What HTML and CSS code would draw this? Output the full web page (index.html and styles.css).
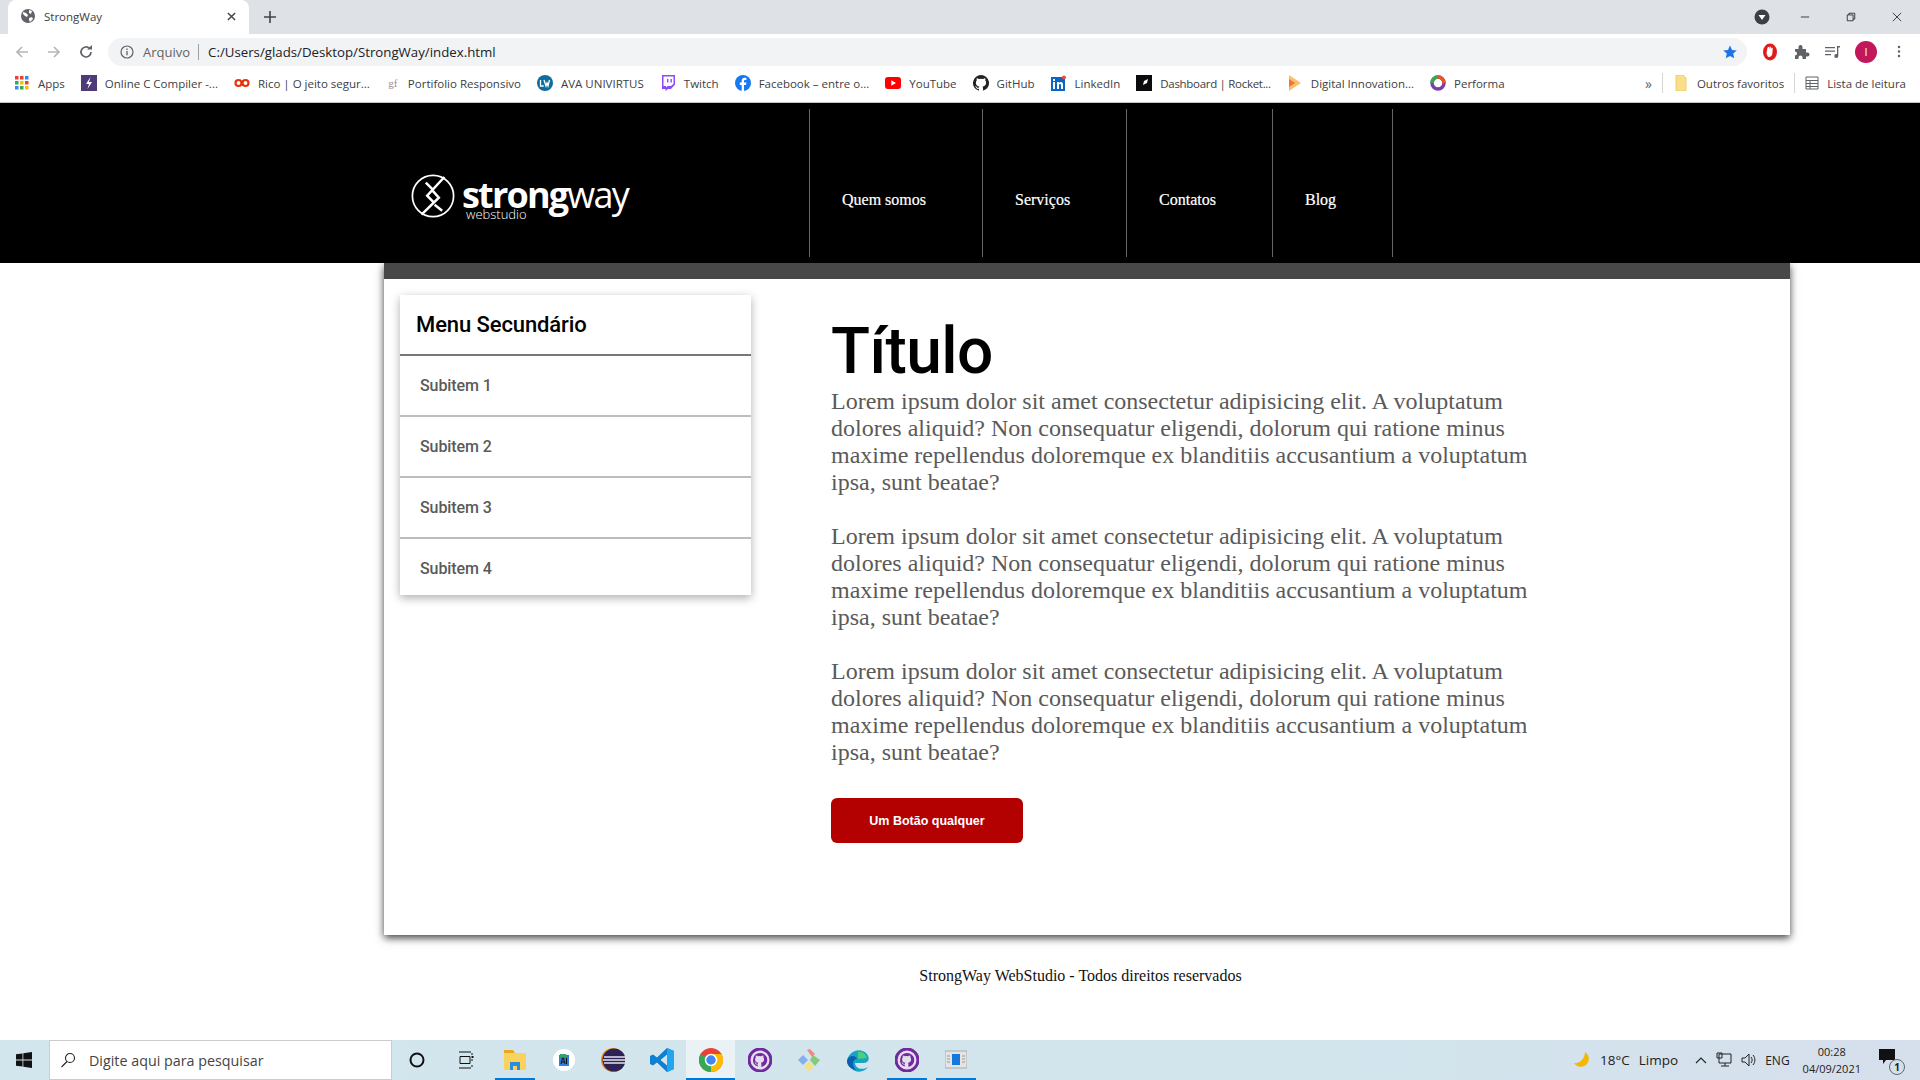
FILE: index.html
```html
<!DOCTYPE html>
<html lang="pt-BR">
<head>
    <meta charset="UTF-8">
    <title>StrongWay</title>
    <link rel="stylesheet" href="styles.css">
</head>
<body>
    <!-- barra de abas -->
    <div class="tabstrip">
        <div class="tab">
            <svg class="ico16" viewBox="0 0 16 16"><circle cx="8" cy="8" r="7" fill="#5f6368"/><path d="M3 4l3 1 2 2-1 2-2-1-2-2zM9 2l3 1-1 3-2-1zM9 10l3-1 1 2-3 3-1-2z" fill="#fff"/></svg>
            <span class="tab-title">StrongWay</span>
            <svg class="tab-close" viewBox="0 0 10 10"><path d="M1 1l8 8M9 1l-8 8" stroke="#444" stroke-width="1.6"/></svg>
        </div>
        <svg class="tab-new" viewBox="0 0 12 12"><path d="M6 0v12M0 6h12" stroke="#444" stroke-width="1.6"/></svg>
        <div class="win-controls">
            <svg class="ico16 win-drop" viewBox="0 0 16 16"><circle cx="8" cy="8" r="7.5" fill="#3c4043"/><path d="M4.500 6h7L8 11z" fill="#fff"/></svg>
            <svg class="win-btn" viewBox="0 0 12 12"><path d="M1 6h10" stroke="#222"/></svg>
            <svg class="win-btn" viewBox="0 0 12 12"><path d="M1.500 3.500h7v7h-7zM3.500 3.500v-2h7v7h-2" fill="none" stroke="#222"/></svg>
            <svg class="win-btn" viewBox="0 0 12 12"><path d="M1 1l10 10M11 1L1 11" stroke="#222"/></svg>
        </div>
    </div>

    <!-- barra de endereco -->
    <div class="toolbar">
        <svg class="nav-ico" viewBox="0 0 16 16"><path d="M14 8H3M8 3L3 8l5 5" fill="none" stroke="#b4b6b9" stroke-width="1.7"/></svg>
        <svg class="nav-ico" viewBox="0 0 16 16"><path d="M2 8h11M8 3l5 5-5 5" fill="none" stroke="#b4b6b9" stroke-width="1.7"/></svg>
        <svg class="nav-ico" viewBox="0 0 16 16"><path d="M13 8a5 5 0 1 1-1.500-3.600" fill="none" stroke="#5f6368" stroke-width="1.7"/><path d="M9 5.500h5V1z" fill="#5f6368"/></svg>
        <div class="omnibox">
            <svg class="ico14" viewBox="0 0 14 14"><circle cx="7" cy="7" r="6" fill="none" stroke="#5f6368" stroke-width="1.2"/><path d="M7 6v4.200M7 3.600v1.400" stroke="#5f6368" stroke-width="1.3"/></svg>
            <span class="omni-scheme">Arquivo</span>
            <span class="omni-url">C:/Users/glads/Desktop/StrongWay/index.html</span>
            <svg class="omni-star" viewBox="0 0 14 14"><path d="M7 .5l2 4.400 4.800.5-3.600 3.200 1 4.700L7 10.900l-4.200 2.400 1-4.700L.2 5.400 5 4.900z" fill="#1a73e8"/></svg>
        </div>
        <div class="ext-icons">
            <svg class="ico18" viewBox="0 0 18 18"><ellipse cx="9" cy="9" rx="7" ry="8.500" fill="#e01b1b"/><path d="M6 7.500c0-2 1-3.500 1-3.500h1l.3 2 .4-2.500h1l.3 2.500.8-1.500 1 .5-.5 6c-.5 2-1.800 3-3.300 3S6 12 5.500 10z" fill="#fff"/></svg>
            <svg class="ico16" viewBox="0 0 16 16"><path d="M1 5h3.500V3a2 2 0 0 1 4 0v2H12v3.500h1.500a2 2 0 0 1 0 4H12V15H8.500v-1.500a2 2 0 0 0-4 0V15H1v-3.500a2 2 0 0 0 0-4z" fill="#5f6368"/></svg>
            <svg class="ico16" viewBox="0 0 16 16"><path d="M0 3h10v1.300H0zM0 6.500h10v1.300H0zM0 10h6v1.300H0zM12 2h3v1.400h-1.700V12a2 2 0 1 1-1.300-1.900z" fill="#5f6368"/></svg>
            <span class="avatar">I</span>
            <svg class="menu-dots" viewBox="0 0 4 16"><circle cx="2" cy="2.500" r="1.500" fill="#5f6368"/><circle cx="2" cy="8" r="1.500" fill="#5f6368"/><circle cx="2" cy="13.500" r="1.500" fill="#5f6368"/></svg>
        </div>
    </div>

    <!-- favoritos -->
    <div class="bookmarks">
        <a class="bm bm-apps">
            <svg class="ico16" viewBox="0 0 16 16"><g fill="#ea4335"><rect x="1" y="1" width="3.500" height="3.500"/><rect x="6" y="1" width="3.500" height="3.500"/></g><rect x="11" y="1" width="3.500" height="3.500" fill="#4285f4"/><rect x="1" y="6" width="3.500" height="3.500" fill="#34a853"/><rect x="6" y="6" width="3.500" height="3.500" fill="#fbbc05"/><rect x="11" y="6" width="3.500" height="3.500" fill="#ea4335"/><rect x="1" y="11" width="3.500" height="3.500" fill="#4285f4"/><rect x="6" y="11" width="3.500" height="3.500" fill="#34a853"/><rect x="11" y="11" width="3.500" height="3.500" fill="#fbbc05"/></svg>
            Apps</a>
        <a class="bm"><svg class="ico16" viewBox="0 0 16 16"><rect width="16" height="16" fill="#4f3a78"/><path d="M9.500 2L5 9h3l-1.500 5L11 7H8z" fill="#fff"/></svg>Online C Compiler -...</a>
        <a class="bm"><svg class="ico16" viewBox="0 0 16 16"><circle cx="4.500" cy="8" r="3" fill="none" stroke="#e8320c" stroke-width="2.200"/><circle cx="11.500" cy="8" r="3" fill="none" stroke="#e8320c" stroke-width="2.200"/></svg>Rico | O jeito segur...</a>
        <a class="bm"><span class="gf-ico">gf</span>Portifolio Responsivo</a>
        <a class="bm"><svg class="ico16" viewBox="0 0 16 16"><circle cx="8" cy="8" r="8" fill="#0f6c9e"/><path d="M3.500 5v6h3.200M7 5l2 6 1-3 1 3 1.500-6" fill="none" stroke="#fff" stroke-width="1.300"/></svg>AVA UNIVIRTUS</a>
        <a class="bm"><svg class="ico16" viewBox="0 0 16 16"><path d="M2 0h13v9.500L11 14H8l-2.500 2v-2H2z" fill="#9146ff"/><path d="M3.500 1.500h10v7.300L11 11H7.500L6 12.500V11H3.500z" fill="#fff"/><path d="M7 4h1.400v3.500H7zM10.500 4h1.400v3.500h-1.400z" fill="#9146ff"/></svg>Twitch</a>
        <a class="bm"><svg class="ico16" viewBox="0 0 16 16"><circle cx="8" cy="8" r="8" fill="#1877f2"/><path d="M9 16v-6h2l.4-2.400H9V6.200c0-.8.300-1.200 1.200-1.200h1.200V3c-2.800-.5-4.700.3-4.700 3v1.600H4.800V10h1.900v6z" fill="#fff"/></svg>Facebook – entre o...</a>
        <a class="bm"><svg class="ico16" viewBox="0 0 16 16"><rect y="2" width="16" height="12" rx="3" fill="#f00"/><path d="M6.300 5.200L11 8l-4.700 2.800z" fill="#fff"/></svg>YouTube</a>
        <a class="bm"><svg class="ico16" viewBox="0 0 16 16"><path d="M8 0a8 8 0 0 0-2.500 15.600c.4 0 .5-.2.500-.4v-1.400c-2.200.5-2.700-1-2.700-1-.4-.9-.9-1.200-.9-1.200-.7-.5.100-.5.100-.5.800 0 1.200.8 1.200.8.700 1.200 1.900.9 2.300.7 0-.5.300-.9.500-1.100-1.800-.2-3.600-.9-3.600-4 0-.9.300-1.600.8-2.100 0-.2-.3-1 .1-2.100 0 0 .7-.2 2.200.8a7.600 7.600 0 0 1 4 0c1.500-1 2.200-.8 2.200-.8.400 1.100.2 1.900.1 2.100.5.500.8 1.200.8 2.100 0 3.100-1.900 3.800-3.700 4 .3.200.6.700.6 1.500v2.200c0 .2.100.5.500.4A8 8 0 0 0 8 0z" fill="#222"/></svg>GitHub</a>
        <a class="bm"><svg class="ico16" viewBox="0 0 16 16"><rect y="2" width="14" height="14" fill="#0a66c2"/><path d="M2 7h2v7H2zM2 4h2v2H2zM6 7h2v1c1-1.500 4-1.500 4 1.200V14h-2v-4c0-1.500-2-1.500-2 0v4H6z" fill="#fff"/><circle cx="13" cy="2.500" r="2" fill="#e74c3c"/></svg>LinkedIn</a>
        <a class="bm tight"><svg class="ico16" viewBox="0 0 16 16"><rect width="16" height="16" fill="#0b0b0f"/><path d="M4 12l3-2 1-4 4-2-1 4-4 2z" fill="#fff"/></svg>Dashboard | Rocket...</a>
        <a class="bm"><svg class="ico16" viewBox="0 0 16 16"><path d="M2 0l12 8-12 8z" fill="#f9c06a"/><path d="M2 4l6 4-6 4z" fill="#f0703e"/></svg>Digital Innovation...</a>
        <a class="bm"><svg class="ico16" viewBox="0 0 16 16"><circle cx="8" cy="8" r="6" fill="none" stroke="#7b3fa8" stroke-width="3.500"/><path d="M8 2a6 6 0 0 1 6 6" fill="none" stroke="#e8552d" stroke-width="3.500"/><path d="M2 8a6 6 0 0 1 6-6" fill="none" stroke="#3aa655" stroke-width="3.500"/></svg>Performa</a>
        <div class="bm-right">
            <span class="bm-more">»</span>
            <span class="bm-sep"></span>
            <a class="bm"><svg class="ico16" viewBox="0 0 16 16"><path d="M3 0h7l3 3v13H3z" fill="#fbdf87" stroke="#e9c664" stroke-width=".8"/></svg>Outros favoritos</a>
            <span class="bm-sep"></span>
            <a class="bm"><svg class="ico14" viewBox="0 0 14 14"><path d="M1 1h12v12H1zM1 4.500h12M1 7.500h12M1 10.500h12M5 4.500v8.500" fill="none" stroke="#5f6368"/></svg>Lista de leitura</a>
        </div>
    </div>

    <!-- pagina -->
    <header class="site-header">
        <div class="logo">
            <svg class="logo-mark" viewBox="0 0 48 48"><circle cx="24" cy="24" r="21.500" fill="none" stroke="#fff" stroke-width="1.800"/><path d="M35.900 4.200L17.900 23.700 24 29.800M12 43.500L30.100 25.700 24 18.900M16.500 10l6.800 6.800M25.700 33.200l7.900 6.200" fill="none" stroke="#fff" stroke-width="2.600"/></svg>
            <div class="logo-text">
                <span class="logo-name"><b>strong</b>way</span>
                <span class="logo-sub">webstudio</span>
            </div>
        </div>
        <nav class="site-nav">
            <a class="nav-item">Quem somos</a>
            <a class="nav-item">Serviços</a>
            <a class="nav-item">Contatos</a>
            <a class="nav-item">Blog</a>
        </nav>
    </header>

    <div class="page">
        <div class="content-box">
            <aside class="side-menu">
                <h3 class="side-title">Menu Secundário</h3>
                <a class="side-item">Subitem 1</a>
                <a class="side-item">Subitem 2</a>
                <a class="side-item">Subitem 3</a>
                <a class="side-item">Subitem 4</a>
            </aside>
            <main class="main-col">
                <h1 class="main-title">Título</h1>
                <p>Lorem ipsum dolor sit amet consectetur adipisicing elit. A voluptatum dolores aliquid? Non consequatur eligendi, dolorum qui ratione minus maxime repellendus doloremque ex blanditiis accusantium a voluptatum ipsa, sunt beatae?</p>
                <p>Lorem ipsum dolor sit amet consectetur adipisicing elit. A voluptatum dolores aliquid? Non consequatur eligendi, dolorum qui ratione minus maxime repellendus doloremque ex blanditiis accusantium a voluptatum ipsa, sunt beatae?</p>
                <p>Lorem ipsum dolor sit amet consectetur adipisicing elit. A voluptatum dolores aliquid? Non consequatur eligendi, dolorum qui ratione minus maxime repellendus doloremque ex blanditiis accusantium a voluptatum ipsa, sunt beatae?</p>
                <button class="btn-red">Um Botão qualquer</button>
            </main>
        </div>
        <footer class="site-footer">StrongWay WebStudio - Todos direitos reservados</footer>
    </div>

    <!-- barra de tarefas -->
    <div class="taskbar">
        <svg class="start" viewBox="0 0 16 16"><path d="M0 2.300l6.500-.9v6.200H0zM7.300 1.300L16 0v7.600H7.300zM0 8.400h6.500v6.200L0 13.700zM7.300 8.400H16V16l-8.700-1.200z" fill="#111"/></svg>
        <div class="search">
            <svg class="ico16" viewBox="0 0 16 16"><circle cx="10" cy="6" r="4.500" fill="none" stroke="#222" stroke-width="1.100"/><path d="M7 9.500L1.500 15" stroke="#222" stroke-width="1.100"/></svg>
            <span>Digite aqui para pesquisar</span>
        </div>
        <div class="task-icons">
            <div class="task"><svg class="ico18" viewBox="0 0 18 18"><circle cx="9" cy="9" r="6.500" fill="none" stroke="#111" stroke-width="2"/></svg></div>
            <div class="task"><svg class="ico18" viewBox="0 0 18 18"><path d="M2 1h12M2 17h12M3 5.500h10v7H3zM15 2v2M15 8v2M15 14v2" fill="none" stroke="#111"/><rect x="14.500" y="5" width="2" height="2" fill="#111"/></svg></div>
            <div class="task open"><svg class="ico24" viewBox="0 0 24 24"><path d="M1 2h9l2 3H1z" fill="#e8a820"/><path d="M1 5h22v17H1z" fill="#fbd25e"/><path d="M7 14h10v8h-3v-4h-4v4H7z" fill="#2a8fd8"/></svg></div>
            <div class="task"><svg class="ico22" viewBox="0 0 22 22"><circle cx="11" cy="11" r="11" fill="#fff"/><path d="M6 6h10v11H6z" fill="#2f7fdc"/><path d="M7 5h6l1 3H7z" fill="#3aa06a"/><path d="M8 15l1.500-6h1L12 15M8.800 13h2.500M13.500 9v6" fill="none" stroke="#111" stroke-width="1"/></svg></div>
            <div class="task"><svg class="ico24" viewBox="0 0 24 24"><circle cx="12" cy="12" r="12" fill="#f28b1e"/><circle cx="13" cy="12" r="11.500" fill="#2c2255"/><path d="M3 9h21M2 12h22M3 15h21" stroke="#e8e4f0" stroke-width="1.500"/></svg></div>
            <div class="task"><svg class="ico24" viewBox="0 0 24 24"><path d="M17 0l7 3v18l-7 3-10-9.500-4 3L0 16V8l3-1.500 4 3zM17 6.500L10.500 12l6.500 5.500z" fill="#0e7fd1"/><path d="M17 0l7 3v18l-7 3V17.500V6.500z" fill="#22a4ee"/></svg></div>
            <div class="task active"><svg class="ico24" viewBox="0 0 24 24"><circle cx="12" cy="12" r="12" fill="#ea4335"/><path d="M12 12L1.600 6A12 12 0 0 0 12 24z" fill="#34a853"/><path d="M12 12v12A12 12 0 0 0 22.400 6H12z" fill="#fbbc05"/><circle cx="12" cy="12" r="5.500" fill="#4285f4" stroke="#fff" stroke-width="1.500"/></svg></div>
            <div class="task"><svg class="ico24" viewBox="0 0 24 24"><circle cx="12" cy="12" r="11" fill="#e6def0" stroke="#6f2a9c" stroke-width="3"/><path d="M12 5a7 7 0 0 0-2.200 13.600v-2.200c-2 .4-2.500-1-2.500-1-.3-.8-.8-1-.8-1 1-.5 1.800 1 1.800 1 .5.800 1.300.6 1.600.4 0-.5.200-.8.400-1-1.600-.2-3.200-.8-3.200-3.500 0-.8.300-1.400.7-1.900 0-.2-.3-.9.100-1.800 0 0 .6-.2 2 .7a6.600 6.600 0 0 1 3.400 0c1.400-.9 2-.7 2-.7.400.9.100 1.600.1 1.800.4.500.7 1.100.7 1.900 0 2.700-1.600 3.300-3.200 3.500.3.200.5.600.5 1.300v2.800A7 7 0 0 0 12 5z" fill="#6f2a9c"/></svg></div>
            <div class="task"><svg class="ico24" viewBox="0 0 24 24"><path d="M10 2l3-1 5 5-3 3z" fill="#ee8a82"/><path d="M1 12l5-5 5 5-5 5z" fill="#85aef0"/><path d="M16 7l7 5-5 6-5-6z" fill="#85c97a"/><path d="M12 14l5 5-5 4-5-4z" fill="#f8e07a"/></svg></div>
            <div class="task"><svg class="ico24" viewBox="0 0 24 24"><path d="M1 13C2 4 14-2 21 6c3 4 2 9-3 9H9c0 5 7 8 13 4-4 6-13 6-17 1-3-3-4-5-4-7z" fill="#19a3c4"/><path d="M1 13c1-5 8-7 10-2-5 0-5 7-1 11C4 21 1 17 1 13z" fill="#0a5fb0"/><path d="M12 4c5-1 8 3 9 6l-9 1z" fill="#4ccf7e"/></svg></div>
            <div class="task open"><svg class="ico24" viewBox="0 0 24 24"><circle cx="12" cy="12" r="11" fill="#e6def0" stroke="#6f2a9c" stroke-width="3"/><path d="M12 5a7 7 0 0 0-2.200 13.600v-2.200c-2 .4-2.500-1-2.500-1-.3-.8-.8-1-.8-1 1-.5 1.800 1 1.800 1 .5.800 1.300.6 1.600.4 0-.5.200-.8.400-1-1.600-.2-3.200-.8-3.200-3.500 0-.8.300-1.400.7-1.900 0-.2-.3-.9.100-1.800 0 0 .6-.2 2 .7a6.600 6.600 0 0 1 3.400 0c1.400-.9 2-.7 2-.7.400.9.100 1.600.1 1.800.4.500.7 1.100.7 1.900 0 2.700-1.600 3.300-3.200 3.500.3.200.5.600.5 1.300v2.800A7 7 0 0 0 12 5z" fill="#6f2a9c"/></svg></div>
            <div class="task open"><svg class="ico22" viewBox="0 0 22 22"><rect y="2" width="22" height="17" fill="#e4e4e4" stroke="#aaa"/><rect x="7" y="5" width="8" height="11" fill="#1578dc"/><path d="M2 7h3M2 10h3M2 13h3M17 7h3M17 10h3M17 13h3" stroke="#999"/></svg></div>
        </div>
        <div class="tray">
            <svg class="ico18" viewBox="0 0 18 18"><path d="M12 1a8 8 0 1 1-11 11c5 1 11-4 11-11z" fill="#f5b700"/></svg>
            <span class="tray-temp">18°C</span>
            <span class="tray-cond">Limpo</span>
            <svg class="tray-arrow" viewBox="0 0 12 8"><path d="M1 7l5-5 5 5" fill="none" stroke="#222" stroke-width="1.100"/></svg>
            <svg class="ico16" viewBox="0 0 16 16"><path d="M3 2h12v9H3zM1 1h5v5H1zM9 11v3M5 14h8" fill="none" stroke="#222"/></svg>
            <svg class="ico16" viewBox="0 0 16 16"><path d="M1 6h3l4-4v12l-4-4H1zM10 5c1.500 2 1.500 4 0 6M12 3c2.500 3 2.500 7 0 10" fill="none" stroke="#222"/></svg>
            <span class="tray-lang">ENG</span>
            <div class="clock"><span>00:28</span><span>04/09/2021</span></div>
            <div class="notif">
                <svg class="ico18" viewBox="0 0 18 18"><path d="M1 1h16v11H8l-3 4v-4H1z" fill="#111"/></svg>
                <span class="notif-badge">1</span>
            </div>
        </div>
    </div>
</body>
</html>
```

FILE: styles.css
```css
* {
    box-sizing: border-box;
}
html, body {
    margin: 0;
    padding: 0;
}
body {
    width: 1920px;
    height: 1080px;
    overflow: hidden;
    display: flex;
    flex-direction: column;
    background-color: #fff;
    font-family: "Liberation Serif", serif;
}
svg {
    display: block;
    flex: none;
}
.ico14 { width: 14px; height: 14px; }
.ico16 { width: 16px; height: 16px; }
.ico18 { width: 18px; height: 18px; }
.ico22 { width: 22px; height: 22px; }
.ico24 { width: 24px; height: 24px; }

/* chrome */
.tabstrip {
    height: 34px;
    background-color: #dee1e6;
    display: flex;
    align-items: flex-end;
    flex: none;
}
.tab {
    width: 241px;
    height: 34px;
    margin-left: 8px;
    padding: 0 12px 2px 12px;
    background-color: #fff;
    border-radius: 8px 8px 0 0;
    display: flex;
    align-items: center;
    gap: 8px;
    font: 11.5px "Open Sans", sans-serif;
    color: #3c4043;
}
.tab-title {
    flex: 1;
}
.tab-close {
    width: 9px;
    height: 9px;
    margin-right: 1px;
}
.tab-new {
    width: 12px;
    height: 12px;
    margin: 0 0 11px 15px;
}
.win-controls {
    margin-left: auto;
    height: 34px;
    display: flex;
    align-items: center;
}
.win-drop {
    margin-right: 30px;
}
.win-btn {
    width: 10px;
    height: 10px;
    margin-right: 36px;
}
.win-btn:last-child {
    margin-right: 18px;
}
.toolbar {
    height: 35px;
    flex: none;
    background-color: #fff;
    display: flex;
    align-items: center;
    padding-left: 14px;
    gap: 16px;
}
.nav-ico {
    width: 16px;
    height: 16px;
}
.omnibox {
    width: 1639px;
    height: 28px;
    margin-left: -2px;
    padding: 0 0 0 12px;
    background-color: #f1f3f4;
    border-radius: 14px;
    display: flex;
    align-items: center;
    font: 13px "Open Sans", sans-serif;
}
.omni-scheme {
    margin-left: 9px;
    padding-right: 8px;
    border-right: 1px solid #9aa0a6;
    color: #5f6368;
    line-height: 16px;
}
.omni-url {
    margin-left: 9px;
    font-size: 13.25px;
    color: #202124;
}
.omni-star {
    width: 14px;
    height: 14px;
    margin-left: auto;
    margin-right: 10px;
}
.ext-icons {
    display: flex;
    align-items: center;
    gap: 15px;
    margin-left: -2px;
}
.avatar {
    width: 22px;
    height: 22px;
    margin-left: -1px;
    border-radius: 50%;
    background-color: #c2185b;
    color: #fff;
    font: 11px/22px "Open Sans", sans-serif;
    text-align: center;
}
.menu-dots {
    width: 4px;
    height: 13px;
    margin-left: 5px;
}
.bookmarks {
    height: 34px;
    flex: none;
    padding: 0 0 5px 14px;
    background-color: #fff;
    border-bottom: 1px solid #c4c4c4;
    display: flex;
    align-items: center;
    gap: 16px;
    font: 11.5px "Open Sans", sans-serif;
    color: #3c4043;
}
.bm {
    display: flex;
    align-items: center;
    gap: 8px;
    white-space: nowrap;
}
.bm.tight {
    letter-spacing: -0.3px;
}
.gf-ico {
    width: 14px;
    font: 11px "Liberation Serif", serif;
    color: #a08a90;
    text-align: center;
}
.bm-right {
    margin-left: auto;
    display: flex;
    align-items: center;
    gap: 10px;
    padding-right: 14px;
}
.bm-more {
    font-size: 14px;
    color: #5f6368;
}
.bm-sep {
    width: 1px;
    height: 20px;
    background-color: #d5d5d5;
}

/* topo do site */
.site-header {
    height: 160px;
    flex: none;
    background-color: #000;
    display: flex;
    padding: 6px 0;
}
.logo {
    width: 809px;
    padding: 64px 0 0 410px;
    display: flex;
    align-items: flex-start;
    gap: 6px;
}
.logo-mark {
    width: 46px;
    height: 46px;
}
.logo-text {
    position: relative;
    color: #fff;
    font-family: "Open Sans", sans-serif;
}
.logo-name {
    font-size: 36px;
    font-weight: 400;
    letter-spacing: -1.8px;
    line-height: 44px;
}
.logo-name b {
    font-weight: 700;
}
.logo-sub {
    position: absolute;
    left: 4px;
    top: 34px;
    font-size: 13px;
    font-weight: 300;
    line-height: 14px;
}
.site-nav {
    display: flex;
}
.nav-item {
    padding: 0 56px 0 32px;
    border-left: 1px solid #666;
    color: #fff;
    font-size: 16px;
    line-height: 182px;
    height: 148px;
    white-space: nowrap;
    -webkit-text-stroke: 0.2px #fff;
}
.nav-item:last-child {
    padding-right: 56px;
    border-right: 1px solid #666;
}

/* conteudo */
.page {
    flex: 1;
    display: flex;
    flex-direction: column;
    align-items: center;
    min-height: 0;
}
.content-box {
    width: 1406px;
    height: 672px;
    margin-left: 254px;
    padding: 16px;
    flex: none;
    border-top: 16px solid #484848;
    background-color: #fff;
    box-shadow: 0 3px 8px rgba(0, 0, 0, 0.75);
    display: flex;
    align-items: flex-start;
}
.side-menu {
    width: 351px;
    flex: none;
    background-color: #fff;
    box-shadow: 0 3px 9px rgba(0, 0, 0, 0.32);
}
.side-title {
    margin: 0;
    height: 61px;
    padding-left: 16px;
    border-bottom: 2px solid #777;
    color: #000;
    font: 500 22px/60px Roboto, sans-serif;
    letter-spacing: -0.1px;
}
.side-item {
    display: block;
    height: 61px;
    padding-left: 20px;
    border-bottom: 2px solid #bdbdbd;
    color: #5a5a5a;
    font: 500 16px/60px Roboto, sans-serif;
    letter-spacing: -0.1px;
}
.side-item:last-child {
    border-bottom: 0;
    height: 56px;
}
.main-col {
    width: 720px;
    margin-left: 80px;
    padding-top: 21px;
}
.main-title {
    margin: 0;
    color: #000;
    font: 500 64px/72px Roboto, sans-serif;
    letter-spacing: -0.6px;
}
.main-col p {
    margin: 0 0 27px;
    color: #5a5a5a;
    font-size: 24px;
    line-height: 27px;
}
.btn-red {
    display: block;
    width: 192px;
    height: 45px;
    margin-top: 32px;
    border: 0;
    border-radius: 6px;
    background-color: #b30000;
    color: #fff;
    font: bold 12.5px "Liberation Sans", sans-serif;
}
.site-footer {
    margin-top: 32px;
    margin-left: 241px;
    color: #111;
    font-size: 16px;
    line-height: 18px;
}

/* windows */
.taskbar {
    height: 40px;
    flex: none;
    background-color: #d3e4ec;
    background-image: linear-gradient(90deg, #d2e6ee 0%, #d2e5ed 70%, #d6dfec 100%);
    display: flex;
    align-items: center;
    font: 14px "Open Sans", sans-serif;
    color: #222;
}
.start {
    width: 16px;
    height: 16px;
    margin: 0 17px 0 16px;
}
.search {
    width: 343px;
    height: 40px;
    padding-left: 10px;
    background-color: #fff;
    border: 1px solid #ccc;
    display: flex;
    align-items: center;
    gap: 13px;
    font-size: 14.3px;
    color: #444;
}
.task-icons {
    display: flex;
}
.task {
    width: 49px;
    height: 40px;
    display: flex;
    align-items: center;
    justify-content: center;
}
.task.open {
    background: linear-gradient(#0078d7, #0078d7) center bottom / 40px 2px no-repeat;
}
.task.active {
    background: #eaf2f6 linear-gradient(#0078d7, #0078d7) center bottom / 100% 2px no-repeat;
}
.tray {
    margin-left: auto;
    display: flex;
    align-items: center;
    gap: 9px;
    font-size: 13.5px;
}
.tray-arrow {
    width: 12px;
    height: 8px;
    margin-left: 8px;
}
.tray-lang {
    font-size: 12px;
    margin-left: -1px;
}
.clock {
    display: flex;
    flex-direction: column;
    align-items: center;
    font-size: 11px;
    line-height: 17px;
    margin-left: 4px;
}
.notif {
    position: relative;
    width: 24px;
    height: 24px;
    margin: 0 18px 0 8px;
}
.notif-badge {
    position: absolute;
    right: -3px;
    bottom: -3px;
    width: 16px;
    height: 16px;
    border: 1px solid #666;
    border-radius: 50%;
    background-color: #d6dfec;
    font: bold 10px/14px "Open Sans", sans-serif;
    text-align: center;
}
```
